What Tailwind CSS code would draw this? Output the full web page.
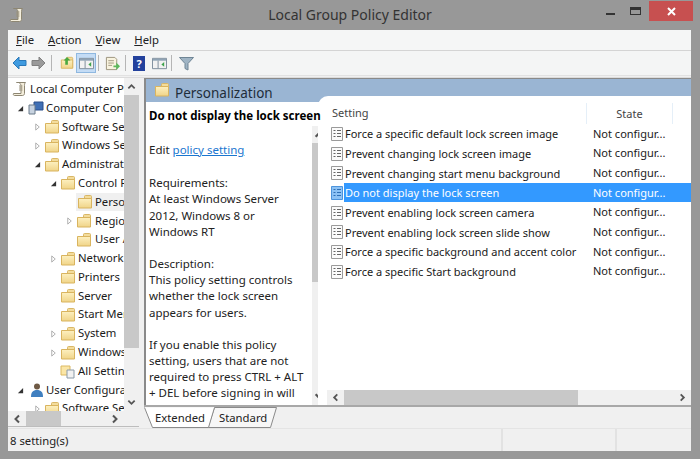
<!DOCTYPE html>
<html lang="en">
<head>
  <meta charset="UTF-8" />
  <title>Local Group Policy Editor</title>
  <script src="https://cdn.jsdelivr.net/npm/@tailwindcss/browser@4"></script>
</head>
<body class="w-[700px] h-[459px] overflow-hidden bg-[#989898] text-[11.300px] text-[#1a1a1a] font-['Noto_Sans',sans-serif]">
<svg width="0" height="0" class="absolute">
  <defs>
    <linearGradient id="fold" x1="0" y1="0" x2="0" y2="1"><stop offset="0" stop-color="#fdf0c0"/><stop offset="1" stop-color="#f0d488"/></linearGradient>
    <symbol id="folder" viewBox="0 0 16 16">
      <path d="M7.500 4.500V2.500c0-.6.4-1 1-1h5c.6 0 1 .4 1 1v11h-3z" fill="#f3dc9c" stroke="#d9b766"/>
      <path d="M1.500 4.500h13v9.500h-13z" fill="url(#fold)" stroke="#d9b45f"/>
    </symbol>
    <symbol id="scroll" viewBox="0 0 16 16">
      <path d="M4.500 1.500h9c-1 1-1 2-1 3v8c0 1.200-1 2-2 2h-8c-1 0-1.500-1-1-2h7.500v-8c0-1 -1-2-2-3z" fill="#f4eedc" stroke="#8d8672"/>
      <path d="M7 5h3.500M7 7h3.500M7 9h3.500" stroke="#9a927c"/>
    </symbol>
    <symbol id="setting" viewBox="0 0 14 16">
      <path d="M1.500 1.500h11v13h-11z" fill="#fbfbfb" stroke="#9a9a9a"/>
      <path d="M3.500 4.500h2M3.500 7.500h2M3.500 10.500h2M7 4.500h4M7 7.500h4M7 10.500h4" stroke="#666"/>
    </symbol>
    <symbol id="setting-sel" viewBox="0 0 14 16">
      <path d="M1.500 1.500h11v13h-11z" fill="#8cc2f5" stroke="#4d94dc"/>
      <path d="M3.500 4.500h2M3.500 7.500h2M3.500 10.500h2M7 4.500h4M7 7.500h4M7 10.500h4" stroke="#2f6fb5"/>
    </symbol>
    <symbol id="tri-open" viewBox="0 0 8 8"><path d="M7 1v6H1z" fill="#333"/></symbol>
    <symbol id="tri-closed" viewBox="0 0 8 8"><path d="M2 .5l4 3.500-4 3.500z" fill="#fff" stroke="#a6a6a6"/></symbol>
    <symbol id="chev-up" viewBox="0 0 10 10"><path d="M1.500 7L5 3.500 8.500 7" fill="none" stroke="#555" stroke-width="2"/></symbol>
    <symbol id="chev-down" viewBox="0 0 10 10"><path d="M1.500 3L5 6.500 8.500 3" fill="none" stroke="#555" stroke-width="2"/></symbol>
    <symbol id="chev-left" viewBox="0 0 10 10"><path d="M7 1.500L3.500 5 7 8.500" fill="none" stroke="#555" stroke-width="2"/></symbol>
    <symbol id="chev-right" viewBox="0 0 10 10"><path d="M3 1.500L6.500 5 3 8.500" fill="none" stroke="#555" stroke-width="2"/></symbol>
    <symbol id="pane" viewBox="0 0 16 16">
      <path d="M.5 2.500h15v11H.5z" fill="#f2f2f2" stroke="#7a8a99"/>
      <path d="M1 3h14v2H1z" fill="#8fa3b5"/>
      <path d="M6.500 5v8" stroke="#7a8a99"/>
      <path d="M10 9l3-2.500v5z" fill="#3fa34d"/>
    </symbol>
  </defs>
</svg>

<div class="flex flex-col h-full">
  <!-- title bar -->
  <div class="flex items-start h-[30px] relative">
    <svg class="w-[16px] h-[16px] mt-[7px] ml-[9px]"><use href="#scroll"/></svg>
    <div class="absolute inset-x-0 top-[5px] text-center text-[14px] leading-[20px] text-[#333]">Local Group Policy Editor</div>
    <div class="ml-auto flex items-start">
      <div class="w-[9px] h-[2px] bg-[#333] mt-[13px] mr-[15px]"></div>
      <div class="w-[11px] h-[8px] border border-[#333] border-t-[3px] mt-[7px] mr-[8px]"></div>
      <div class="w-[44px] h-[20px] mt-[1px] mr-[7px] bg-[#c75050] text-white flex items-center justify-center">
        <svg width="9" height="9" viewBox="0 0 9 9"><path d="M1 1l7 7M8 1l-7 7" stroke="#fff" stroke-width="2"/></svg>
      </div>
    </div>
  </div>

  <div class="flex-1 flex flex-col ml-[8px] mr-[9px] mb-[8px] bg-[#f0f0f0] min-h-0">
    <!-- menu -->
    <div class="h-[21px] flex items-center bg-[#f5f6f6] border-b border-[#d4d4d4] pl-[8px] pt-[1px] gap-[14px] text-[#222]">
      <span><u>F</u>ile</span><span><u>A</u>ction</span><span><u>V</u>iew</span><span><u>H</u>elp</span>
    </div>
    <!-- toolbar -->
    <div class="h-[25px] flex items-center bg-[#f4f5f5] border-b border-[#e2e2e2] pl-[4px]">
      <svg class="w-[15px] h-[14px]" viewBox="0 0 15 14"><path d="M7 1L1 7l6 6V9.500h7v-5H7z" fill="#3f9be0" stroke="#2a78b8"/></svg>
      <svg class="w-[15px] h-[14px] ml-[4px]" viewBox="0 0 15 14"><path d="M8 1l6 6-6 6V9.500H1v-5h7z" fill="#9a9a9a" stroke="#808080"/></svg>
      <div class="w-px h-[16px] bg-[#b5b5b5] ml-[5px]"></div>
      <svg class="w-[14px] h-[14px] ml-[8px]" viewBox="0 0 16 16"><use href="#folder"/><path d="M6 10V5H4l4-4 4 4h-3v5z" fill="#4aa83f"/></svg>
      <div class="w-[20px] h-[20px] ml-[2px] bg-[#c4dcf5] border border-[#8fb8e0] flex items-center justify-center">
        <svg class="w-[15px] h-[15px]"><use href="#pane"/></svg>
      </div>
      <div class="w-px h-[16px] bg-[#b5b5b5] ml-[2px]"></div>
      <svg class="w-[15px] h-[15px] ml-[6px]" viewBox="0 0 16 16">
        <path d="M1.500 1.500h9l2 2v11h-11z" fill="#f8f3df" stroke="#9a927c"/>
        <path d="M3.500 5h6M3.500 7.500h6M3.500 10h4" stroke="#a09880"/>
        <path d="M9 10h3V7l4 4-4 4v-3H9z" fill="#5cb85c"/>
      </svg>
      <div class="w-px h-[16px] bg-[#b5b5b5] ml-[5px]"></div>
      <div class="w-[12px] h-[15px] ml-[7px] bg-[#23419c] text-white font-bold text-[11px] leading-[15px] text-center">?</div>
      <svg class="w-[15px] h-[15px] ml-[7px]"><use href="#pane"/></svg>
      <div class="w-px h-[16px] bg-[#b5b5b5] ml-[4px]"></div>
      <svg class="w-[15px] h-[15px] ml-[7px]" viewBox="0 0 15 15"><path d="M.5 1.500h14L9 7.500v6.500l-3-1.500v-5z" fill="#9fb4c4" stroke="#6f8595"/></svg>
    </div>

    <div class="flex-1 flex min-h-0 mt-[1px] border-t border-[#dcdcdc]">
      <!-- tree pane -->
      <div class="w-[131px] shrink-0 bg-white flex flex-col mb-[1px]">
        <div class="flex-1 flex min-h-0">
          <div class="w-[116px] overflow-hidden pt-[2px]">
            <div class="flex items-center h-[18.800px] whitespace-nowrap pl-[4px]"><svg class="w-[16px] h-[16px] mr-[2px] shrink-0"><use href="#scroll"/></svg>Local Computer Policy</div>
            <div class="flex items-center h-[18.800px] whitespace-nowrap pl-[9px]"><svg class="w-[7px] h-[7px] mr-[4px] shrink-0"><use href="#tri-open"/></svg><svg class="w-[16px] h-[16px] mr-[2px] shrink-0" viewBox="0 0 16 16"><path d="M6 2h9v8H6z" fill="#3f6fb5" stroke="#2b4f8a"/><path d="M1 5h6v9H1z" fill="#c8d3e0" stroke="#6a7a8a"/></svg>Computer Configuration</div>
            <div class="flex items-center h-[18.800px] whitespace-nowrap pl-[26px]"><svg class="w-[7px] h-[8px] mr-[3px] shrink-0"><use href="#tri-closed"/></svg><svg class="w-[16px] h-[16px] mr-[2px] shrink-0"><use href="#folder"/></svg>Software Settings</div>
            <div class="flex items-center h-[18.800px] whitespace-nowrap pl-[26px]"><svg class="w-[7px] h-[8px] mr-[3px] shrink-0"><use href="#tri-closed"/></svg><svg class="w-[16px] h-[16px] mr-[2px] shrink-0"><use href="#folder"/></svg>Windows Settings</div>
            <div class="flex items-center h-[18.800px] whitespace-nowrap pl-[26px]"><svg class="w-[7px] h-[7px] mr-[3px] shrink-0"><use href="#tri-open"/></svg><svg class="w-[16px] h-[16px] mr-[2px] shrink-0"><use href="#folder"/></svg>Administrative Templates</div>
            <div class="flex items-center h-[18.800px] whitespace-nowrap pl-[42px]"><svg class="w-[7px] h-[7px] mr-[3px] shrink-0"><use href="#tri-open"/></svg><svg class="w-[16px] h-[16px] mr-[2px] shrink-0"><use href="#folder"/></svg>Control Panel</div>
            <div class="flex items-center h-[18.800px] whitespace-nowrap pl-[68px]"><div class="flex flex-1 items-center h-[18px] bg-[#f0f0f0] pl-[1px]"><svg class="w-[16px] h-[16px] mr-[2px] shrink-0"><use href="#folder"/></svg>Personalization</div></div>
            <div class="flex items-center h-[18.800px] whitespace-nowrap pl-[58px]"><svg class="w-[7px] h-[8px] mr-[3px] shrink-0"><use href="#tri-closed"/></svg><svg class="w-[16px] h-[16px] mr-[3px] shrink-0"><use href="#folder"/></svg>Regional</div>
            <div class="flex items-center h-[18.800px] whitespace-nowrap pl-[68px]"><svg class="w-[16px] h-[16px] mr-[3px] shrink-0"><use href="#folder"/></svg>User Accounts</div>
            <div class="flex items-center h-[18.800px] whitespace-nowrap pl-[42px]"><svg class="w-[7px] h-[8px] mr-[3px] shrink-0"><use href="#tri-closed"/></svg><svg class="w-[16px] h-[16px] mr-[2px] shrink-0"><use href="#folder"/></svg>Network</div>
            <div class="flex items-center h-[18.800px] whitespace-nowrap pl-[52px]"><svg class="w-[16px] h-[16px] mr-[2px] shrink-0"><use href="#folder"/></svg>Printers</div>
            <div class="flex items-center h-[18.800px] whitespace-nowrap pl-[52px]"><svg class="w-[16px] h-[16px] mr-[2px] shrink-0"><use href="#folder"/></svg>Server</div>
            <div class="flex items-center h-[18.800px] whitespace-nowrap pl-[52px]"><svg class="w-[16px] h-[16px] mr-[2px] shrink-0"><use href="#folder"/></svg>Start Menu</div>
            <div class="flex items-center h-[18.800px] whitespace-nowrap pl-[42px]"><svg class="w-[7px] h-[8px] mr-[3px] shrink-0"><use href="#tri-closed"/></svg><svg class="w-[16px] h-[16px] mr-[2px] shrink-0"><use href="#folder"/></svg>System</div>
            <div class="flex items-center h-[18.800px] whitespace-nowrap pl-[42px]"><svg class="w-[7px] h-[8px] mr-[3px] shrink-0"><use href="#tri-closed"/></svg><svg class="w-[16px] h-[16px] mr-[2px] shrink-0"><use href="#folder"/></svg>Windows Components</div>
            <div class="flex items-center h-[18.800px] whitespace-nowrap pl-[52px]"><svg class="w-[16px] h-[16px] mr-[2px] shrink-0" viewBox="0 0 16 16"><path d="M1 3h9v9H1z" fill="#fbe6a6" stroke="#dcb962"/><path d="M7 7h7v8H7z" fill="#f2f2f2" stroke="#8a9aa8"/></svg>All Settings</div>
            <div class="flex items-center h-[18.800px] whitespace-nowrap pl-[9px]"><svg class="w-[7px] h-[7px] mr-[4px] shrink-0"><use href="#tri-open"/></svg><svg class="w-[16px] h-[16px] mr-[2px] shrink-0" viewBox="0 0 16 16"><circle cx="9" cy="4.500" r="3" fill="#6f5a45"/><path d="M3 15c0-5 2-7 6-7s6 2 6 7z" fill="#3f7fc0"/></svg>User Configuration</div>
            <div class="flex items-center h-[18.800px] whitespace-nowrap pl-[26px]"><svg class="w-[7px] h-[8px] mr-[3px] shrink-0"><use href="#tri-closed"/></svg><svg class="w-[16px] h-[16px] mr-[2px] shrink-0"><use href="#folder"/></svg>Software Settings</div>
          </div>
          <div class="w-[15px] flex flex-col bg-[#f0f0f0]">
            <svg class="w-[15px] h-[17px] p-[3px]"><use href="#chev-up"/></svg>
            <div class="h-[253px] bg-[#c8c8c8]"></div>
            <div class="flex-1"></div>
            <svg class="w-[15px] h-[17px] p-[3px]"><use href="#chev-down"/></svg>
          </div>
        </div>
        <div class="h-[16px] flex bg-[#f0f0f0] items-center border-b border-[#bdbdbd]">
          <svg class="w-[18px] h-[16px] p-[3px]"><use href="#chev-left"/></svg>
          <div class="w-[35px] h-full bg-[#c8c8c8]"></div>
          <div class="flex-1"></div>
          <svg class="w-[18px] h-[16px] p-[3px] mr-[15px]"><use href="#chev-right"/></svg>
        </div>
      </div>

      <!-- right side -->
      <div class="flex-1 min-w-0 flex flex-col ml-[5px] border-l-2 border-t border-[#8a8a8a]">
        <div class="h-[23px] shrink-0 bg-[#9ab5d3] flex items-start pl-[8px] pt-[4px] text-[13.500px] leading-[20px] text-[#1f2d3a]">
          <svg class="w-[16px] h-[16px] mr-[5px] -mt-[1px]"><use href="#folder"/></svg>Personalization
        </div>
        <div class="flex-1 min-h-0 flex bg-white">
          <!-- description -->
          <div class="w-[181px] shrink-0 flex flex-col">
            <p class="h-[24px] shrink-0 pl-[3px] pt-[6px] text-[11.500px] leading-[16px] font-bold text-black whitespace-nowrap relative z-10">Do not display the lock screen</p>
            <div class="flex-1 min-h-0 flex">
              <div class="w-[166px] overflow-hidden pl-[3px] pt-[16px] text-[11.500px] leading-[16.200px] text-[#222] whitespace-nowrap">
                <p>Edit <a class="text-[#1a76cf] underline">policy setting </a></p>
                <p class="mt-[17px]">Requirements:<br>At least Windows Server<br>2012, Windows 8 or<br>Windows RT</p>
                <p class="mt-[16px]">Description:<br>This policy setting controls<br>whether the lock screen<br>appears for users.</p>
                <p class="mt-[16px]">If you enable this policy<br>setting, users that are not<br>required to press CTRL + ALT<br>+ DEL before signing in will</p>
              </div>
              <div class="w-[15px] flex flex-col bg-[#f0f0f0]">
                <svg class="w-[15px] h-[17px] p-[2px]"><use href="#chev-up"/></svg>
                <div class="h-[139px] bg-[#c8c8c8]"></div>
                <div class="flex-1"></div>
                <svg class="w-[15px] h-[17px] p-[2px]"><use href="#chev-down"/></svg>
              </div>
            </div>
          </div>
          <!-- settings table -->
          <div class="flex-1 min-w-0 flex flex-col -mt-[6px] -ml-[9px] pl-[9px] bg-white rounded-tl-[10px] relative text-[11px]">
            <div class="h-[21px] shrink-0 mt-[7px] flex items-center text-[#444]">
              <div class="flex-1 pl-[5px]">Setting</div>
              <div class="w-[87px] text-center border-x border-[#e5eff8] leading-[21px]">State</div>
              <div class="w-[18px]"></div>
            </div>
            <div class="flex-1 min-h-0">
              <div class="flex items-center h-[19.700px] pl-[3px]"><svg class="w-[14px] h-[16px] shrink-0"><use href="#setting"/></svg><span class="flex-1 pl-[1px] leading-[19px] whitespace-nowrap">Force a specific default lock screen image</span><span class="w-[98px]">Not configur...</span></div>
              <div class="flex items-center h-[19.700px] pl-[3px]"><svg class="w-[14px] h-[16px] shrink-0"><use href="#setting"/></svg><span class="flex-1 pl-[1px] leading-[19px] whitespace-nowrap">Prevent changing lock screen image</span><span class="w-[98px]">Not configur...</span></div>
              <div class="flex items-center h-[19.700px] pl-[3px]"><svg class="w-[14px] h-[16px] shrink-0"><use href="#setting"/></svg><span class="flex-1 pl-[1px] leading-[19px] whitespace-nowrap">Prevent changing start menu background</span><span class="w-[98px]">Not configur...</span></div>
              <div class="flex items-center h-[19.700px] pl-[3px]"><svg class="w-[14px] h-[16px] shrink-0"><use href="#setting-sel"/></svg><div class="flex-1 flex bg-[#3399ff] text-white leading-[19px]"><span class="flex-1 pl-[1px] whitespace-nowrap">Do not display the lock screen</span><span class="w-[98px]">Not configur...</span></div></div>
              <div class="flex items-center h-[19.700px] pl-[3px]"><svg class="w-[14px] h-[16px] shrink-0"><use href="#setting"/></svg><span class="flex-1 pl-[1px] leading-[19px] whitespace-nowrap">Prevent enabling lock screen camera</span><span class="w-[98px]">Not configur...</span></div>
              <div class="flex items-center h-[19.700px] pl-[3px]"><svg class="w-[14px] h-[16px] shrink-0"><use href="#setting"/></svg><span class="flex-1 pl-[1px] leading-[19px] whitespace-nowrap">Prevent enabling lock screen slide show</span><span class="w-[98px]">Not configur...</span></div>
              <div class="flex items-center h-[19.700px] pl-[3px]"><svg class="w-[14px] h-[16px] shrink-0"><use href="#setting"/></svg><span class="flex-1 pl-[1px] leading-[19px] whitespace-nowrap">Force a specific background and accent color</span><span class="w-[98px]">Not configur...</span></div>
              <div class="flex items-center h-[19.700px] pl-[3px]"><svg class="w-[14px] h-[16px] shrink-0"><use href="#setting"/></svg><span class="flex-1 pl-[1px] leading-[19px] whitespace-nowrap">Force a specific Start background</span><span class="w-[98px]">Not configur...</span></div>
            </div>
            <div class="h-[15px] shrink-0 flex bg-[#f0f0f0] items-center">
              <svg class="w-[17px] h-[15px] p-[3px]"><use href="#chev-left"/></svg>
              <div class="w-[234px] h-full bg-[#c8c8c8]"></div>
              <div class="flex-1"></div>
              <svg class="w-[17px] h-[15px] p-[3px]"><use href="#chev-right"/></svg>
            </div>
          </div>
        </div>
        <!-- tabs -->
        <div class="h-[23px] shrink-0 bg-[#f0f0f0] border-t-2 border-[#a8a8a8] flex text-[#222] -ml-[2px] relative leading-[21px]">
          <svg class="absolute left-0 top-0 w-[140px] h-[21px]" viewBox="0 0 140 21">
            <path d="M70.500 .5h62l-6 20H64z" fill="#f7f7f7" stroke="#8a8a8a"/>
            <path d="M.5 .5l8 20h56l6-20" fill="#fff" stroke="#8a8a8a"/>
          </svg>
          <span class="relative w-[75px] pl-[11px]">Extended</span>
          <span class="relative">Standard</span>
        </div>
      </div>
    </div>
    <!-- status bar -->
    <div class="h-[23px] shrink-0 flex bg-[#f0f0f0] border-t border-[#e4e4e4] text-[#222]">
      <div class="w-[495px] pl-[2px] pt-[3px] border-r-2 border-[#e2e2e2] leading-[18px]">8 setting(s)</div>
      <div class="w-[114px] border-r-2 border-[#e2e2e2]"></div>
    </div>
  </div>
</div>
</body>
</html>
